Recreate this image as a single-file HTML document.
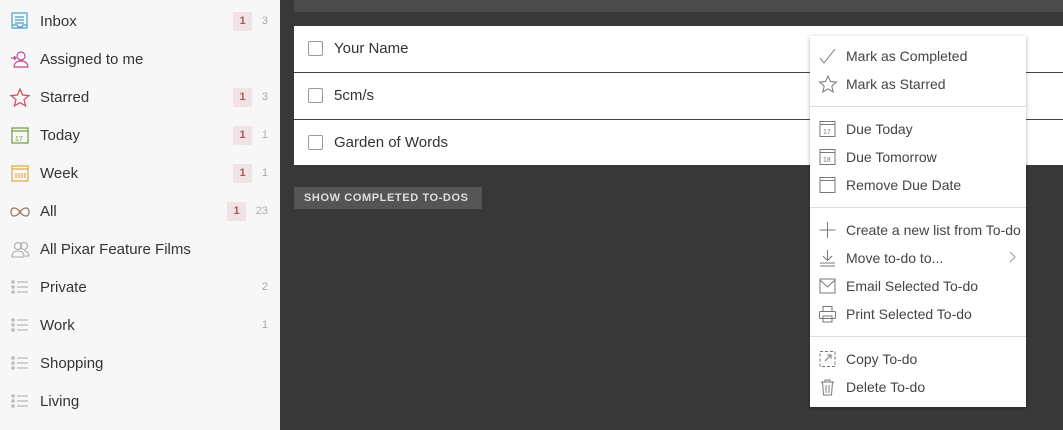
<!DOCTYPE html>
<html><head><meta charset="utf-8"><style>
*{margin:0;padding:0;box-sizing:border-box}
body{width:1063px;height:430px;overflow:hidden;background:#383838;font-family:"Liberation Sans",sans-serif;position:relative}
#side{position:absolute;left:0;top:0;width:280px;height:430px;background:#f7f7f7}
.it{position:absolute;left:0;width:280px;height:38px;display:flex;align-items:center}
.it svg{position:absolute;left:10px;top:10px}
.it .t{position:absolute;left:40px;top:11px;font-size:15px;color:#333}
.b{position:absolute;left:233px;top:10px;width:19px;height:19px;background:#f1e3e3;color:#b5525b;font-size:11px;font-weight:bold;text-align:center;line-height:19px}
.c{position:absolute;right:12px;top:13px;font-size:11px;color:#aaa}
#top{position:absolute;left:294px;top:0;width:769px;height:12px;background:#4b4b4b}
#rows{position:absolute;left:294px;top:26px;width:769px;height:139px;background:#fff}
.r{height:47px;border-bottom:1px solid #444;position:relative}
.r:last-child{border:none}
.cb{position:absolute;left:14px;top:15px;width:15px;height:15px;border:1px solid #999;border-radius:2px}
.r .t{position:absolute;left:40px;top:14px;font-size:15px;color:#333}
#btn{position:absolute;left:294px;top:187px;width:188px;height:22px;background:#555;color:#ddd;font-size:11px;font-weight:bold;letter-spacing:.6px;line-height:22px;padding-left:10px}
#menu{position:absolute;left:810px;top:36px;width:216px;height:371px;background:#fff;box-shadow:0 1px 4px rgba(0,0,0,.3)}
.m{position:absolute;left:0;width:216px;height:28px}
.m .t{position:absolute;left:36px;top:6px;font-size:14px;color:#444}
.m svg{position:absolute;left:8px;top:5px}
.sep{position:absolute;left:0;width:216px;height:1px;background:#ddd}
</style></head><body>
<div id="side">
<div class="it" style="top:2px"><svg width="20" height="20" fill="none" stroke="#4a9fd0" stroke-width="1.2"><rect x="2" y="1" width="15" height="15"/><path d="M5 5h9M5 8h9M5 11h9M2 13h5l1 2h4l1-2h4"/></svg><span class="t">Inbox</span><span class="b">1</span><span class="c">3</span></div>
<div class="it" style="top:40px"><svg width="20" height="20" fill="none" stroke="#c0498f" stroke-width="1.2"><circle cx="11" cy="6" r="4"/><path d="M4 17c0-4 3-6 7-6s7 2 7 6zM1 8h5M4 6l2 2-2 2"/></svg><span class="t">Assigned to me</span></div>
<div class="it" style="top:78px"><svg width="20" height="20" fill="none" stroke="#d9475a" stroke-width="1.2"><path d="M10 1l2.6 6 6.4.5-5 4.2 1.6 6.3L10 14.6 4.4 18l1.6-6.3-5-4.2 6.4-.5z"/></svg><span class="t">Starred</span><span class="b">1</span><span class="c">3</span></div>
<div class="it" style="top:116px"><svg width="20" height="20" fill="none" stroke="#6c9a3a" stroke-width="1.2"><rect x="2" y="2" width="16" height="15"/><path d="M2 5h16"/><text x="5" y="15" font-size="7" fill="#6c9a3a" stroke="none">17</text></svg><span class="t">Today</span><span class="b">1</span><span class="c">1</span></div>
<div class="it" style="top:154px"><svg width="20" height="20" fill="none" stroke="#e0a93a" stroke-width="1.2"><rect x="2" y="2" width="16" height="15"/><path d="M2 5h16M6 9v5M9 9v5M12 9v5M15 9v5"/></svg><span class="t">Week</span><span class="b">1</span><span class="c">1</span></div>
<div class="it" style="top:192px"><svg width="20" height="20" fill="none" stroke="#9a7a5e" stroke-width="1.3"><path d="M10 10c-2-3-4-4-6-4s-3 2-3 4 1 4 3 4 4-1 6-4 4-4 6-4 3 2 3 4-1 4-3 4-4-1-6-4z"/></svg><span class="t">All</span><span class="b" style="left:227px">1</span><span class="c">23</span></div>
<div class="it" style="top:230px"><svg width="20" height="20" fill="none" stroke="#aaa" stroke-width="1.1"><circle cx="8" cy="6" r="3.5"/><circle cx="14" cy="6" r="3.5"/><path d="M2 17c0-4 2-6 6-6s6 2 6 6zM14 11c3 0 5 2 5 5h-4"/></svg><span class="t">All Pixar Feature Films</span></div>
<div class="it" style="top:268px"><svg width="20" height="20" fill="none" stroke="#aaa" stroke-width="1"><path d="M7 4h11M7 9h11M7 14h11"/><rect x="2" y="3" width="2" height="2"/><rect x="2" y="8" width="2" height="2"/><rect x="2" y="13" width="2" height="2"/></svg><span class="t">Private</span><span class="c">2</span></div>
<div class="it" style="top:306px"><svg width="20" height="20" fill="none" stroke="#aaa" stroke-width="1"><path d="M7 4h11M7 9h11M7 14h11"/><rect x="2" y="3" width="2" height="2"/><rect x="2" y="8" width="2" height="2"/><rect x="2" y="13" width="2" height="2"/></svg><span class="t">Work</span><span class="c">1</span></div>
<div class="it" style="top:344px"><svg width="20" height="20" fill="none" stroke="#aaa" stroke-width="1"><path d="M7 4h11M7 9h11M7 14h11"/><rect x="2" y="3" width="2" height="2"/><rect x="2" y="8" width="2" height="2"/><rect x="2" y="13" width="2" height="2"/></svg><span class="t">Shopping</span></div>
<div class="it" style="top:382px"><svg width="20" height="20" fill="none" stroke="#aaa" stroke-width="1"><path d="M7 4h11M7 9h11M7 14h11"/><rect x="2" y="3" width="2" height="2"/><rect x="2" y="8" width="2" height="2"/><rect x="2" y="13" width="2" height="2"/></svg><span class="t">Living</span></div>
</div>
<div id="top"></div>
<div id="rows">
<div class="r"><div class="cb"></div><span class="t">Your Name</span></div>
<div class="r"><div class="cb"></div><span class="t">5cm/s</span></div>
<div class="r"><div class="cb"></div><span class="t">Garden of Words</span></div>
</div>
<div id="btn">SHOW COMPLETED TO-DOS</div>
<div id="menu">
<div class="m" style="top:6px"><svg width="20" height="18" fill="none" stroke="#777" stroke-width="1"><path d="M2 11l4 5L17 2"/></svg><span class="t">Mark as Completed</span></div>
<div class="m" style="top:34px"><svg width="20" height="18" fill="none" stroke="#777" stroke-width="1"><path d="M10 1l2.4 5.5 6 .5-4.6 4 1.4 6L10 13.8 4.8 17l1.4-6-4.6-4 6-.5z"/></svg><span class="t">Mark as Starred</span></div>
<div class="sep" style="top:70px"></div>
<div class="m" style="top:79px"><svg width="20" height="18" fill="none" stroke="#777" stroke-width="1"><rect x="2" y="1.5" width="15" height="15"/><path d="M2 4.5h15"/><text x="5" y="14" font-size="7" fill="#777" stroke="none">17</text></svg><span class="t">Due Today</span></div>
<div class="m" style="top:107px"><svg width="20" height="18" fill="none" stroke="#777" stroke-width="1"><rect x="2" y="1.5" width="15" height="15"/><path d="M2 4.5h15"/><text x="5" y="14" font-size="7" fill="#777" stroke="none">18</text></svg><span class="t">Due Tomorrow</span></div>
<div class="m" style="top:135px"><svg width="20" height="18" fill="none" stroke="#777" stroke-width="1"><rect x="2" y="1.5" width="15" height="15"/><path d="M2 4.5h15"/></svg><span class="t">Remove Due Date</span></div>
<div class="sep" style="top:171px"></div>
<div class="m" style="top:180px"><svg width="20" height="18" fill="none" stroke="#777" stroke-width="1"><path d="M9.5 1v16M1.5 9h16"/></svg><span class="t">Create a new list from To-do</span></div>
<div class="m" style="top:208px"><svg width="20" height="18" fill="none" stroke="#777" stroke-width="1"><path d="M9.5 1v10M5 7l4.5 4.5L14 7M2 14h15M2 17h15"/></svg><span class="t">Move to-do to...</span><svg style="left:198px;top:7px" width="8" height="12" fill="none" stroke="#999"><path d="M2 1l5 5-5 5"/></svg></div>
<div class="m" style="top:236px"><svg width="20" height="18" fill="none" stroke="#777" stroke-width="1"><rect x="2" y="2" width="15" height="14"/><path d="M2 3l7.5 7L17 3"/></svg><span class="t">Email Selected To-do</span></div>
<div class="m" style="top:264px"><svg width="20" height="18" fill="none" stroke="#777" stroke-width="1"><rect x="5" y="1.5" width="9" height="5"/><rect x="1.5" y="6.5" width="16" height="7" rx="1"/><rect x="5" y="11" width="9" height="6"/></svg><span class="t">Print Selected To-do</span></div>
<div class="sep" style="top:300px"></div>
<div class="m" style="top:309px"><svg width="20" height="18" fill="none" stroke="#777" stroke-width="1" stroke-dasharray="3 2"><rect x="2" y="1.5" width="15" height="15"/><path d="M7 11l6-6M9 5h4v4" stroke-dasharray="none"/></svg><span class="t">Copy To-do</span></div>
<div class="m" style="top:337px"><svg width="20" height="18" fill="none" stroke="#777" stroke-width="1"><path d="M3 4h13M7 4V2h5v2M4.5 4l1 13h8l1-13M8 7v8M11 7v8"/></svg><span class="t">Delete To-do</span></div>
</div>
</body></html>
